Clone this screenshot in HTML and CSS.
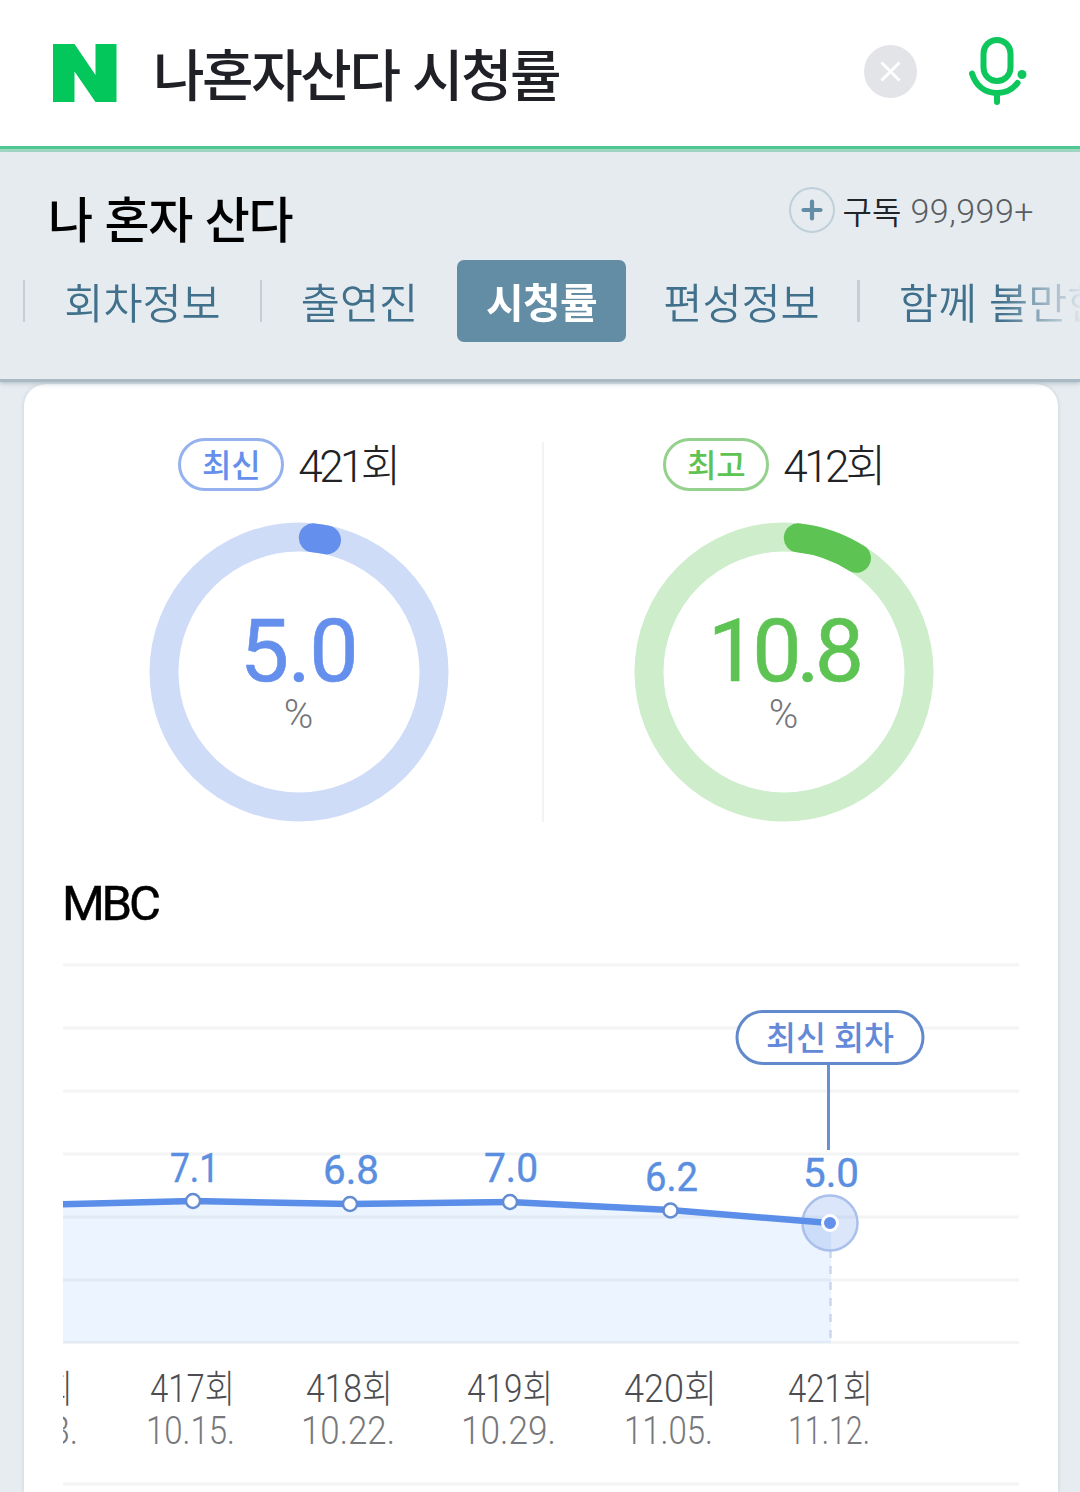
FILE: index.html
```html
<!DOCTYPE html>
<html lang="ko">
<head>
<meta charset="utf-8">
<title>나혼자산다 시청률</title>
<link rel="stylesheet" href="styles.css">
</head>
<body>
<header class="search">
  <svg class="logo" viewBox="0 0 64 58"><path fill="#03c75a" d="M0 0H21.500L42.500 31V0H63.500V58H42.500L21.500 27.500V58H0Z"/></svg>
  <div class="query">나혼자산다 시청률</div>
  <svg class="clear" viewBox="0 0 53 53"><circle cx="26.500" cy="26.500" r="26.500" fill="#e3e4e8"/><path d="M17.500 17.500l18 18m0-18l-18 18" stroke="#fff" stroke-width="3"/></svg>
  <svg class="mic" viewBox="0 0 60 72" fill="none" stroke="#0dc65c" stroke-width="6" stroke-linecap="round"><rect x="15.500" y="5" width="27" height="41" rx="13.500"/><path d="M4 38.500C8 51 17 58 29 58C38 58 45 54 49.500 48M29 58V67"/><circle cx="54" cy="39.500" r="4.500" fill="#0dc65c" stroke="none"/></svg>
</header>
<section class="program">
  <div class="title-row">
    <h1 class="title">나 혼자 산다</h1>
    <div class="subscribe">
      <svg class="plus" viewBox="0 0 46 46"><circle cx="23" cy="23" r="22" fill="none" stroke="#bfd0d9" stroke-width="2"/><path d="M23 14.500v17m-8.500-8.500h17" stroke="#628da5" stroke-width="4.200" stroke-linecap="round"/></svg>
      <span class="sub-label">구독</span><span class="sub-count">99,999+</span>
    </div>
  </div>
  <nav class="tabs">
    <a class="tab tab-info">회차정보</a>
    <a class="tab tab-cast">출연진</a>
    <a class="tab tab-active">시청률</a>
    <a class="tab tab-schedule">편성정보</a>
    <a class="tab tab-more">함께 볼만한</a>
  </nav>
</section>
<main class="card">
  <div class="ratings">
    <section class="rating rating-latest">
      <div class="episode"><span class="pill">최신</span><span class="number">421회</span></div>
      <div class="ring">
        <svg class="ring-art" viewBox="0 0 300 300" fill="none" stroke-width="29"><circle cx="150" cy="150" r="135" stroke="#cfdcf8"/><path d="M164.300 15.800A135 135 0 0 1 177.500 17.850" stroke="#648fec" stroke-linecap="round"/></svg>
        <div class="value">5.0</div><div class="unit">%</div>
      </div>
    </section>
    <section class="rating rating-best">
      <div class="episode"><span class="pill">최고</span><span class="number">412회</span></div>
      <div class="ring">
        <svg class="ring-art" viewBox="0 0 300 300" fill="none" stroke-width="29"><circle cx="150" cy="150" r="135" stroke="#cdedcb"/><path d="M164.300 15.800A135 135 0 0 1 222.500 36.300" stroke="#5dc353" stroke-linecap="round"/></svg>
        <div class="value">10.8</div><div class="unit">%</div>
      </div>
    </section>
  </div>
  <h2 class="channel">MBC</h2>
  <svg class="chart" viewBox="63 950 956 542">
    <path d="M63 965H1019M63 1028H1019M63 1091H1019M63 1154H1019M63 1217H1019M63 1280H1019M63 1342.500H1019M63 1484H1019" stroke="#f3f4f6" stroke-width="3"/>
    <path d="M63 1204L193 1201L350 1204L510 1202L670 1210L831 1223V1343H63Z" fill="#5a9cfb" fill-opacity=".115"/>
    <path d="M830.500 1250V1340" stroke="#ccd6ee" stroke-width="2.500" stroke-dasharray="8 8"/>
    <circle cx="830" cy="1223" r="27.500" fill="#5b8de8" fill-opacity=".22" stroke="#a9c0ec" stroke-width="2.500"/>
    <path d="M55 1204.500L193 1201L350 1204L510 1202L670 1210L830 1223" fill="none" stroke="#5a8ee8" stroke-width="6.500"/>
    <g fill="#fff" stroke="#648cd0" stroke-width="2.500"><circle cx="193" cy="1201" r="7"/><circle cx="350" cy="1204" r="7"/><circle cx="510" cy="1202" r="7"/><circle cx="670.500" cy="1210.500" r="7"/></g>
    <circle cx="830" cy="1223" r="7.500" fill="#6492ea" stroke="#fff" stroke-width="3"/>
    <path d="M828.500 1064V1150" stroke="#6891d2" stroke-width="3"/>
    <rect x="737" y="1011.500" width="186" height="52" rx="26" fill="#fff" stroke="#6389cd" stroke-width="3"/>
    <text class="flag" x="766" y="1050" textLength="128" lengthAdjust="spacingAndGlyphs">최신 회차</text>
    <g class="point-values">
      <text x="170" y="1182" textLength="49" lengthAdjust="spacingAndGlyphs">7.1</text>
      <text x="323" y="1184" textLength="56" lengthAdjust="spacingAndGlyphs">6.8</text>
      <text x="484" y="1182" textLength="54" lengthAdjust="spacingAndGlyphs">7.0</text>
      <text x="645" y="1191" textLength="53" lengthAdjust="spacingAndGlyphs">6.2</text>
      <text x="803" y="1187" textLength="56" lengthAdjust="spacingAndGlyphs">5.0</text>
    </g>
    <g class="episodes">
      <text x="-12" y="1402" textLength="85" lengthAdjust="spacingAndGlyphs">416회</text>
      <text x="150" y="1402" textLength="85" lengthAdjust="spacingAndGlyphs">417회</text>
      <text x="306" y="1402" textLength="87" lengthAdjust="spacingAndGlyphs">418회</text>
      <text x="467" y="1402" textLength="86" lengthAdjust="spacingAndGlyphs">419회</text>
      <text x="624" y="1402" textLength="93" lengthAdjust="spacingAndGlyphs">420회</text>
      <text x="788" y="1402" textLength="85" lengthAdjust="spacingAndGlyphs">421회</text>
    </g>
    <g class="dates">
      <text x="-16" y="1444" textLength="94" lengthAdjust="spacingAndGlyphs">10.08.</text>
      <text x="146" y="1444" textLength="89" lengthAdjust="spacingAndGlyphs">10.15.</text>
      <text x="301" y="1444" textLength="94" lengthAdjust="spacingAndGlyphs">10.22.</text>
      <text x="461" y="1444" textLength="95" lengthAdjust="spacingAndGlyphs">10.29.</text>
      <text x="624" y="1444" textLength="89" lengthAdjust="spacingAndGlyphs">11.05.</text>
      <text x="788" y="1444" textLength="82" lengthAdjust="spacingAndGlyphs">11.12.</text>
    </g>
  </svg>
</main>
</body>
</html>
```

FILE: styles.css
```css
* { box-sizing: border-box; }
body {
  margin: 0;
  height: 1492px;
  overflow: hidden;
  background: #e7ecf0;
  font-family: "Noto Sans CJK KR", sans-serif;
  color: #000;
}
svg { display: block; flex: none; }

.search {
  height: 152px;
  display: flex;
  align-items: flex-start;
  background: #fff;
  border-bottom: 3px solid #9cdcc1;
  box-shadow: inset 0 -3px #4fc793;
}
.logo { width: 64px; height: 58px; margin: 44px 0 0 53px; }
.query {
  flex: 1;
  margin: 32px 0 0 36px;
  font-size: 56px;
  line-height: 80px;
  font-weight: 500;
  letter-spacing: -2.4px;
  color: #202126;
  white-space: nowrap;
}
.clear { width: 53px; height: 53px; margin-top: 45px; }
.mic { width: 60px; height: 72px; margin: 35px 52px 0 51px; }

.program {
  position: relative;
  height: 230px;
  background: #e6ebf0;
  border-bottom: 3px solid #a9bac5;
  box-shadow: 0 1px 5px #a9bac5;
}
.title-row {
  height: 108px;
  padding: 35px 46px 0 48px;
  display: flex;
  align-items: flex-start;
  justify-content: space-between;
}
.title {
  margin: -3px 0 0;
  font-size: 49px;
  line-height: 66px;
  font-weight: 500;
  letter-spacing: -1.2px;
}
.subscribe {
  display: flex;
  align-items: center;
  height: 46px;
  line-height: 46px;
}
.plus { width: 46px; height: 46px; }
.sub-label { margin-left: 8px; font-size: 32px; font-weight: 350; color: #202428; }
.sub-count {
  margin-left: 9px;
  padding-top: 2px;
  font-family: Roboto, sans-serif;
  font-size: 34px;
  font-weight: 300;
  letter-spacing: .5px;
  color: #595d61;
}
.tabs {
  display: flex;
  align-items: center;
  height: 82px;
  padding-left: 23px;
  overflow: hidden;
  -webkit-mask-image: linear-gradient(90deg, #000 1000px, transparent 1085px);
  mask-image: linear-gradient(90deg, #000 1000px, transparent 1085px);
}
.tab {
  flex: none;
  height: 42px;
  line-height: 42px;
  font-size: 42.5px;
  font-weight: 350;
  color: #40708b;
  text-align: center;
  white-space: nowrap;
}
.tab-info { width: 237px; border-left: 2px solid #c3ced6; }
.tab-cast { width: 197px; border-left: 2px solid #c3ced6; }
.tab-active {
  width: 169px;
  height: 82px;
  border-radius: 7px;
  background: #628da5;
  color: #fff;
  font-size: 41px;
  line-height: 81px;
  font-weight: 700;
  letter-spacing: -.8px;
}
.tab-schedule { width: 231px; }
.tab-more { border-left: 3px solid #c3ced6; padding-left: 39px; }

.card {
  margin: 2px 22px 0 24px;
  height: 1108px;
  padding: 58px 31px 0;
  background: #fff;
  border-radius: 22px 22px 0 0;
  box-shadow: 0 0 4px #c5d0d6;
}
.ratings { display: grid; grid-template-columns: 489px 479px; height: 380px; }
.rating {
  display: flex;
  flex-direction: column;
  align-items: center;
}
.rating-latest { border-right: 2px solid #f2f3f5; color: #648fec; }
.rating-best { color: #5dc353; }
.episode {
  display: flex;
  align-items: center;
  gap: 14px;
  height: 53px;
  margin: -4px 0 31px;
  padding-right: 21px;
}
.pill {
  width: 106px;
  height: 53px;
  border: 3px solid #95b1ee;
  border-radius: 27px;
  font-size: 32px;
  line-height: 44px;
  font-weight: 500;
  text-align: center;
}
.rating-best .pill { border-color: #93d18c; }
.number {
  padding-top: 6px;
  font-family: Roboto, "Noto Sans CJK KR", sans-serif;
  font-size: 44px;
  line-height: 53px;
  font-weight: 300;
  letter-spacing: -3.6px;
  color: #202226;
}
.ring {
  display: grid;
  width: 300px;
  height: 300px;
  grid-template-rows: 90px 80px 42px;
  justify-items: center;
}
.ring-art { width: 300px; height: 300px; grid-area: 1 / 1 / 4 / 2; }
.value {
  grid-area: 2 / 1;
  font-family: Roboto, sans-serif;
  font-size: 88px;
  line-height: 78px;
  font-weight: 400;
  letter-spacing: -1.5px;
  -webkit-text-stroke: .6px currentColor;
}
.rating-best .value { letter-spacing: -5px; }
.unit {
  grid-area: 3 / 1;
  padding-top: 2px;
  font-family: Roboto, sans-serif;
  font-size: 40px;
  line-height: 42px;
  font-weight: 300;
  color: #75767a;
}
.channel {
  margin: 50px 0 0 7px;
  height: 78px;
  font-family: Roboto, sans-serif;
  font-size: 49px;
  line-height: 64px;
  font-weight: 400;
  letter-spacing: -3.2px;
  -webkit-text-stroke: .5px currentColor;
}
.chart { width: 956px; height: 542px; margin-left: 8px; overflow: hidden; }
.chart text { font-family: Roboto, "Noto Sans CJK KR", sans-serif; }
.flag { font-size: 33px; font-weight: 500; fill: #6389d8; }
.point-values { font-size: 40px; font-weight: 400; fill: #5a8ee0; stroke: #5a8ee0; stroke-width: .4px; }
.episodes { font-size: 38px; font-weight: 300; fill: #4c4d51; }
.dates { font-size: 38px; font-weight: 300; fill: #77787c; }
```
